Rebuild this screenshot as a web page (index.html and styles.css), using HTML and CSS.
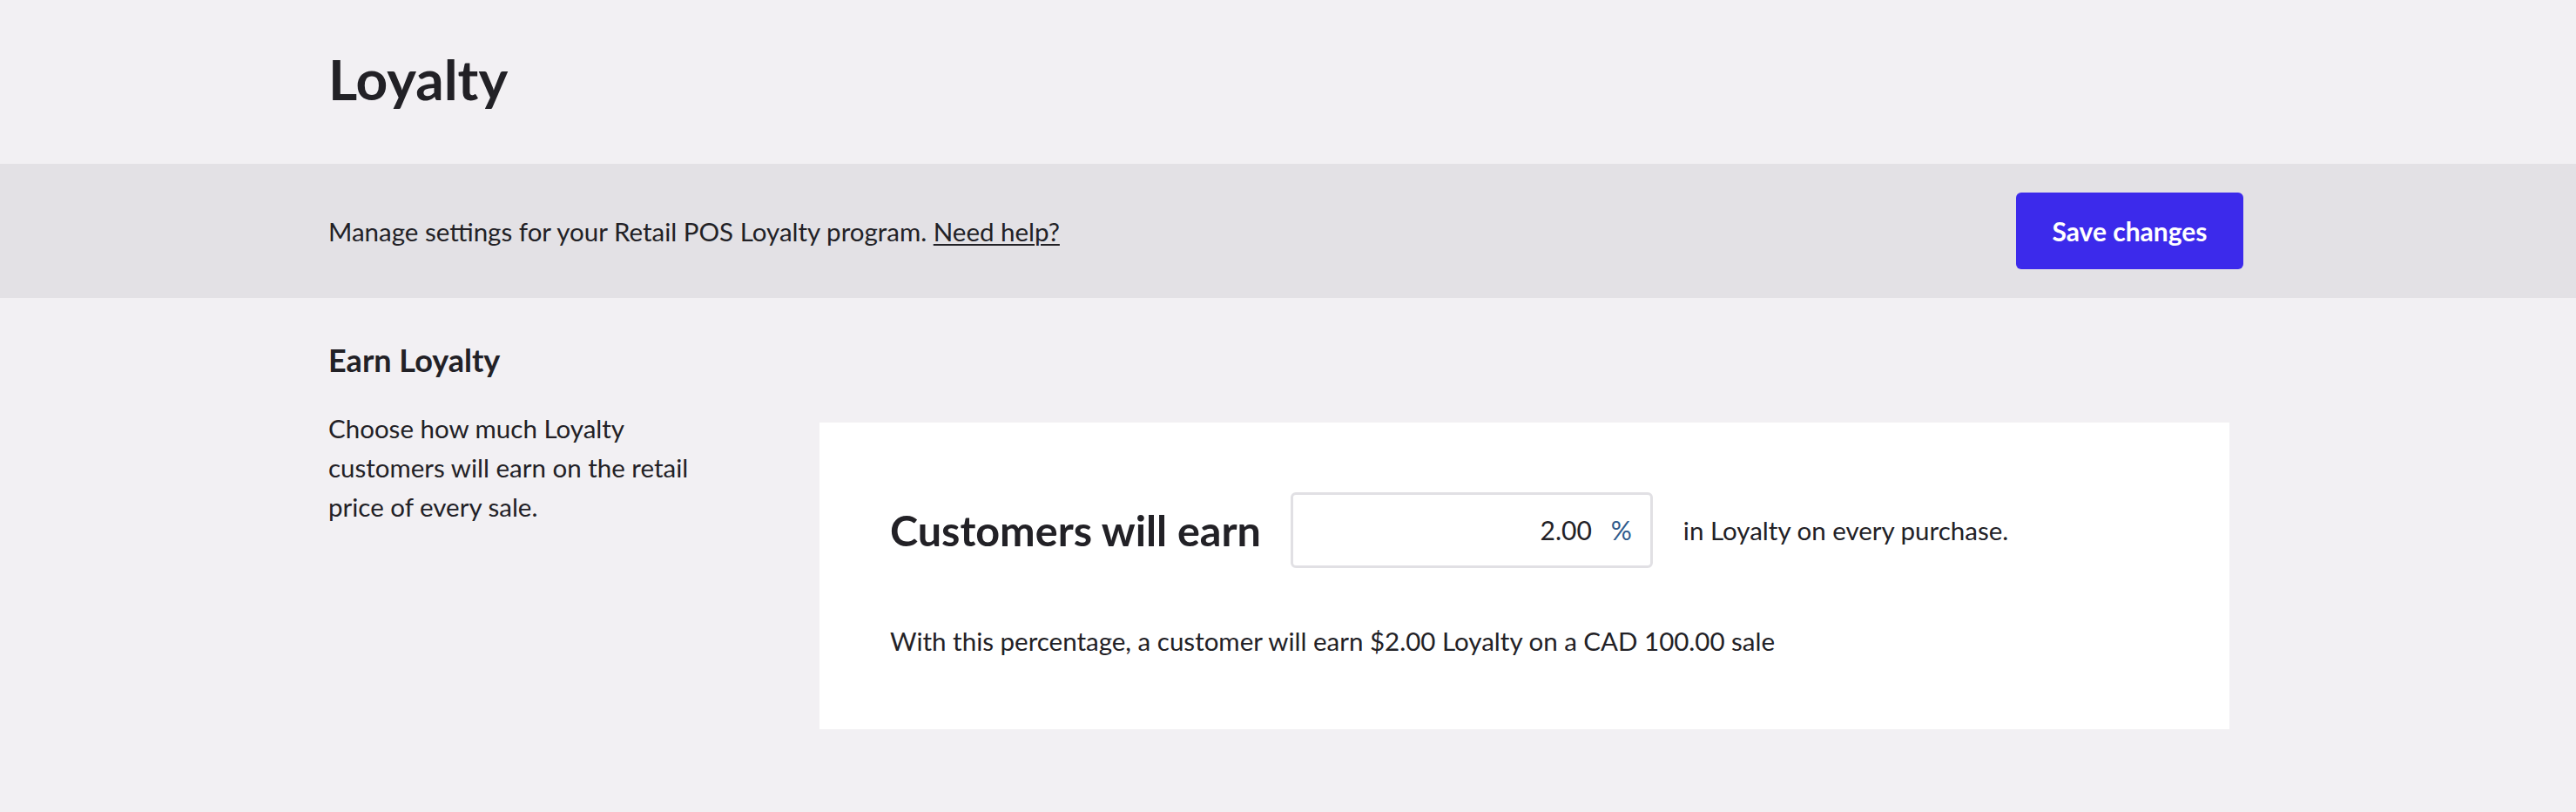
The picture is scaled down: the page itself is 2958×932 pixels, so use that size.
FILE: index.html
```html
<!DOCTYPE html>
<html lang="en">
<head>
<meta charset="utf-8">
<title>Loyalty</title>
<link rel="stylesheet" href="styles.css">
</head>
<body>
  <header class="page-header">
    <div class="container">
      <h1 class="page-title">Loyalty</h1>
    </div>
  </header>
  <div class="toolbar">
    <div class="container toolbar-inner">
      <p class="toolbar-text">Manage settings for your Retail POS Loyalty program. <a class="help-link" href="#">Need help?</a></p>
      <button class="btn-primary" type="button">Save changes</button>
    </div>
  </div>
  <main class="container section">
    <h2 class="section-title">Earn Loyalty</h2>
    <div class="section-grid">
      <p class="section-desc">Choose how much Loyalty customers will earn on the retail price of every sale.</p>
      <div class="card">
        <div class="earn-row">
          <span class="earn-label">Customers will earn</span>
          <label class="pct-input">
            <span class="pct-value">2.00</span>
            <span class="pct-unit">%</span>
          </label>
          <span class="earn-suffix">in Loyalty on every purchase.</span>
        </div>
        <p class="earn-example">With this percentage, a customer will earn $2.00 Loyalty on a CAD 100.00 sale</p>
      </div>
    </div>
  </main>
</body>
</html>
```

FILE: styles.css
```css
* { box-sizing: border-box; }

html, body {
  margin: 0;
  padding: 0;
}

body {
  background: #f2f0f3;
  color: #222126;
  font-family: Lato, "Open Sans", "Liberation Sans", sans-serif;
  font-size: 29.5px;
  line-height: 1.2;
  min-height: 932px;
}

.container {
  width: 2199px;
  margin-left: 377px;
}

.page-header {
  padding-top: 53px;
  padding-bottom: 58px;
}

.page-title {
  margin: 0;
  font-size: 64px;
  font-weight: 700;
  line-height: 1.2;
}

.toolbar {
  background: #e3e1e5;
  height: 154px;
  display: flex;
  align-items: center;
}

.toolbar-inner {
  display: flex;
  align-items: center;
  justify-content: space-between;
}

.toolbar-text {
  margin: 0;
  font-size: 29.5px;
  padding-top: 2px;
}

.help-link {
  color: #222126;
  text-decoration: underline;
  text-decoration-thickness: 2px;
  text-underline-offset: 3px;
}

.btn-primary {
  width: 261px;
  height: 88px;
  border: 0;
  border-radius: 6px;
  background: #3c2aeb;
  color: #ffffff;
  font-family: Lato, "Open Sans", "Liberation Sans", sans-serif;
  font-size: 30px;
  font-weight: 700;
  line-height: 1.2;
  padding: 0;
}

.section {
  padding-top: 50px;
}

.section-title {
  margin: 0;
  font-size: 36px;
  font-weight: 700;
  line-height: 1.2;
}

.section-grid {
  display: grid;
  grid-template-columns: 450px 1fr;
  column-gap: 114px;
  margin-top: 34px;
  margin-right: 16px;
  align-items: start;
}

.section-desc {
  margin: 0;
  font-size: 29.5px;
  line-height: 45px;
}

.card {
  margin-top: 16px;
  background: #ffffff;
  padding: 80px 81px 78px;
  height: 352px;
}

.earn-row {
  display: flex;
  align-items: center;
  gap: 34px;
}

.earn-label {
  font-size: 48.5px;
  font-weight: 700;
  line-height: 1.2;
}

.pct-input {
  width: 416px;
  height: 87px;
  border: 3px solid #e1e0e4;
  border-radius: 6px;
  display: flex;
  align-items: center;
  justify-content: flex-end;
  gap: 22px;
  padding-right: 21px;
  font-size: 30px;
}

.pct-value {
  color: #222126;
}

.pct-unit {
  color: #2e5a8c;
}

.earn-suffix {
  font-size: 29.5px;
  margin-left: 1px;
}

.earn-example {
  margin: 61px 0 0;
  font-size: 29.5px;
  line-height: 45px;
}
```
